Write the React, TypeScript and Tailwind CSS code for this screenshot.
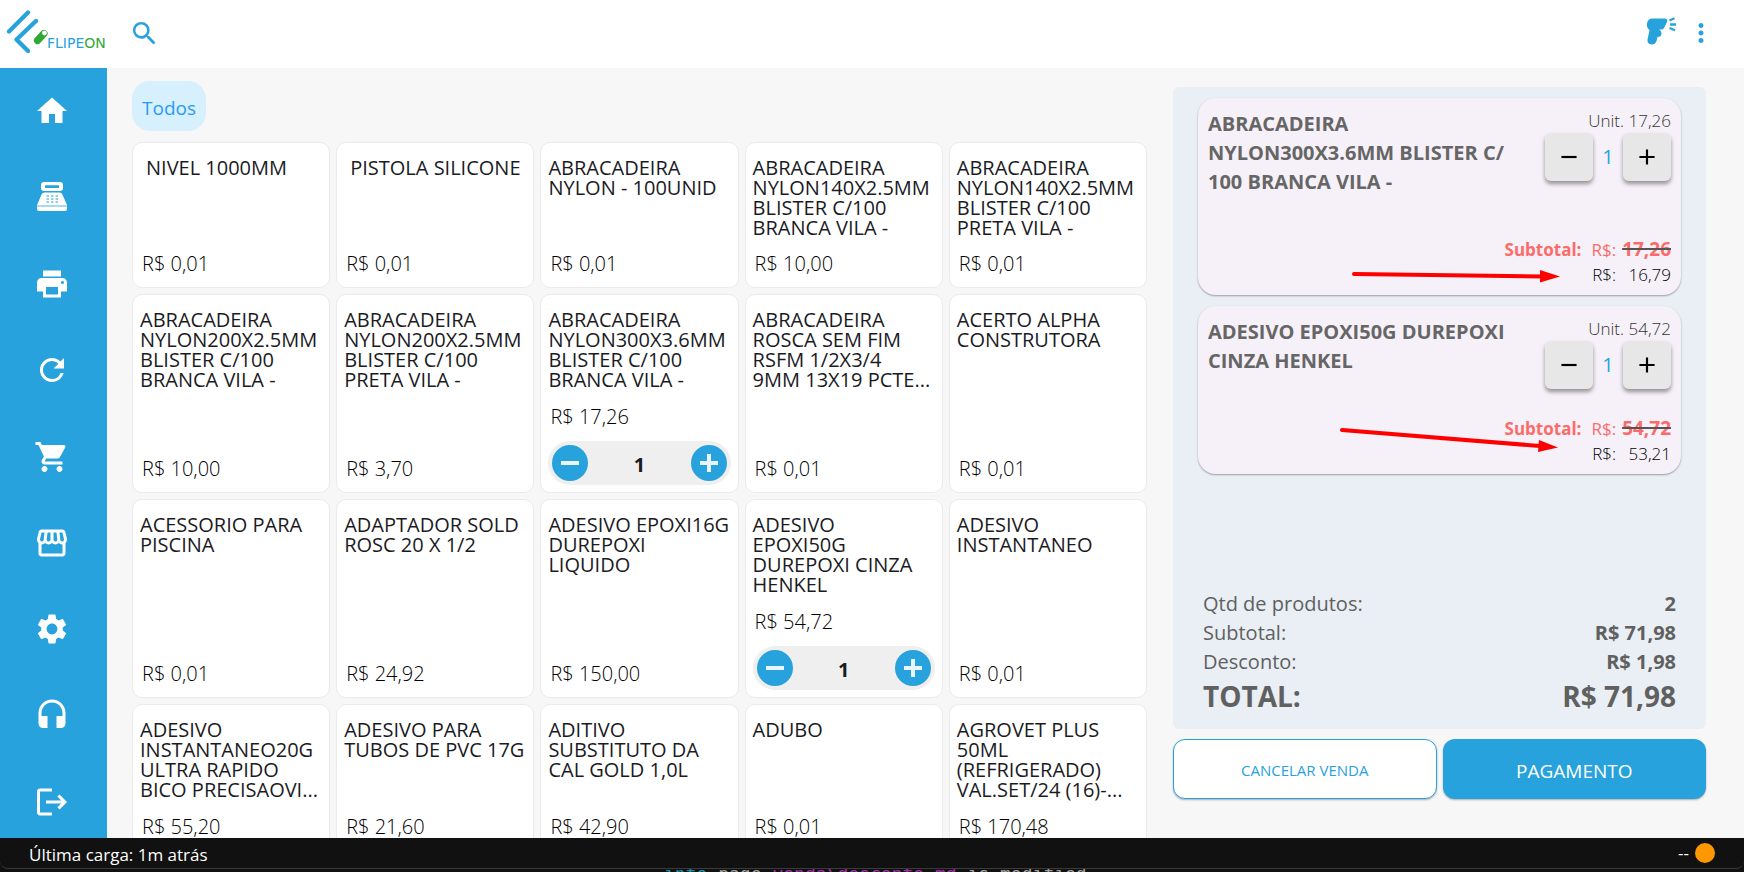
import { Fragment } from "react";
import type { ReactNode } from "react";
import {
  MdAdd,
  MdHeadset,
  MdHome,
  MdLocalPrintshop,
  MdLogout,
  MdMoreVert,
  MdOutlineStorefront,
  MdRefresh,
  MdRemove,
  MdSearch,
  MdSettings,
  MdShoppingCart,
} from "react-icons/md";

type Product = {
  name: string;
  price: string;
  indent?: boolean;
  qty?: number;
};

type CartItem = {
  name: string;
  unit: string;
  discounted: string;
  arrow: ReactNode;
};

const products: Product[] = [
  { name: "NIVEL 1000MM", price: "0,01", indent: true },
  { name: "PISTOLA SILICONE", price: "0,01", indent: true },
  { name: "ABRACADEIRA NYLON - 100UNID", price: "0,01" },
  { name: "ABRACADEIRA NYLON140X2.5MM BLISTER C/100 BRANCA VILA -", price: "10,00" },
  { name: "ABRACADEIRA NYLON140X2.5MM BLISTER C/100 PRETA VILA -", price: "0,01" },
  { name: "ABRACADEIRA NYLON200X2.5MM BLISTER C/100 BRANCA VILA -", price: "10,00" },
  { name: "ABRACADEIRA NYLON200X2.5MM BLISTER C/100 PRETA VILA -", price: "3,70" },
  { name: "ABRACADEIRA NYLON300X3.6MM BLISTER C/100 BRANCA VILA -", price: "17,26", qty: 1 },
  { name: "ABRACADEIRA ROSCA SEM FIM RSFM 1/2X3/4\n9MM 13X19 PCTE...", price: "0,01" },
  { name: "ACERTO ALPHA CONSTRUTORA", price: "0,01" },
  { name: "ACESSORIO PARA PISCINA", price: "0,01" },
  { name: "ADAPTADOR SOLD ROSC 20 X 1/2", price: "24,92" },
  { name: "ADESIVO EPOXI16G DUREPOXI LIQUIDO", price: "150,00" },
  { name: "ADESIVO\nEPOXI50G\nDUREPOXI CINZA HENKEL", price: "54,72", qty: 1 },
  { name: "ADESIVO INSTANTANEO", price: "0,01" },
  { name: "ADESIVO INSTANTANEO20G ULTRA RAPIDO BICO PRECISAOVI...", price: "55,20" },
  { name: "ADESIVO PARA TUBOS DE PVC 17G", price: "21,60" },
  { name: "ADITIVO SUBSTITUTO DA CAL GOLD 1,0L", price: "42,90" },
  { name: "ADUBO", price: "0,01" },
  { name: "AGROVET PLUS 50ML (REFRIGERADO) VAL.SET/24 (16)-...", price: "170,48" },
];

const cart: CartItem[] = [
  {
    name: "ABRACADEIRA NYLON300X3.6MM BLISTER C/\u200b100 BRANCA VILA -",
    unit: "17,26",
    discounted: "16,79",
    arrow: (
      <svg
        className="absolute right-[121px] bottom-3 pointer-events-none"
        width="208"
        height="14"
        viewBox="0 0 208 14"
        aria-hidden="true"
      >
        <path d="M2 5 L190 7.5" stroke="#ff0000" strokeWidth="4" strokeLinecap="round" />
        <path d="M188 1 L208 7.5 L188 13.5 Z" fill="#ff0000" />
      </svg>
    ),
  },
  {
    name: "ADESIVO EPOXI50G DUREPOXI CINZA HENKEL",
    unit: "54,72",
    discounted: "53,21",
    arrow: (
      <svg
        className="absolute right-[123px] bottom-5 pointer-events-none"
        width="218"
        height="28"
        viewBox="0 0 218 28"
        aria-hidden="true"
      >
        <path d="M2 4 L200 20" stroke="#ff0000" strokeWidth="4" strokeLinecap="round" />
        <path d="M199 14 L218 21.5 L198 26 Z" fill="#ff0000" />
      </svg>
    ),
  },
];

function CashRegister() {
  return (
    <svg width="36" height="36" viewBox="0 0 36 36" fill="currentColor" aria-hidden="true">
      <path
        fillRule="evenodd"
        d="M10 3h16a3 3 0 0 1 3 3v3a3 3 0 0 1-3 3H10a3 3 0 0 1-3-3V6a3 3 0 0 1 3-3zm1 3.200v2.800h14V6.200z"
      />
      <path d="M10.500 13.500h15a3 3 0 0 1 2.800 1.800L33 26H3l4.700-10.700a3 3 0 0 1 2.800-1.800z" />
      <path d="M3 26h30v2H3z" fillOpacity="0.6" />
      <path d="M3 28h30v2a2 2 0 0 1-2 2H5a2 2 0 0 1-2-2z" />
      <path
        d="M12.500 17h2.500M17 17h2.500M21.500 17h2.500M12.500 20h2.500M17 20h2.500M21.500 20h2.500M12.500 23h2.500M17 23h2.500M21.500 23h2.500"
        stroke="#27a2dc"
        strokeWidth="1.200"
      />
    </svg>
  );
}

function ScannerGun() {
  return (
    <svg className="-mt-1" width="32" height="30" viewBox="0 0 32 30" aria-hidden="true">
      <path
        d="M6.500 2.500H19q3 0 2 3.500l-3 6q-.800 1.500-2.500 1.500h-2.500q2.500 1 2.500 4 0 3.500-4 3.500l-1 4q-1.200 3.500-5 3.500-4.500-.500-4-5l2-9.500Q.500 12 1 7.500q.800-5 5.500-5z"
        fill="#27a2dc"
      />
      <path d="M23.500 4.500l5-2.300M24 8.500h6M23.500 12l5.500 2.300" stroke="#27a2dc" strokeWidth="2.300" />
    </svg>
  );
}

function Logo() {
  return (
    <svg className="-mt-1.5" width="102" height="46" viewBox="0 0 102 46" role="img" aria-label="Flipeon">
      <g fill="none" stroke="#27a2dc" strokeWidth="4.400" strokeLinecap="round" strokeLinejoin="round">
        <path d="M3 23.500L22 4.500" />
        <path d="M30 13L10.500 31.500L22 43" />
      </g>
      <path d="M31.500 32.500L38 25.500" stroke="#2fa836" strokeWidth="7.200" strokeLinecap="round" />
      <circle cx="38.500" cy="25" r="2.400" fill="#ffffff" />
      <text x="41" y="40" fontSize="14" fontFamily="'DejaVu Sans', sans-serif" fill="#27a2dc">
        FLIPE
        <tspan fill="#2fa836">ON</tspan>
      </text>
    </svg>
  );
}

const menu = [
  { label: "Início", icon: <MdHome size={36} /> },
  { label: "Caixa", icon: <CashRegister /> },
  { label: "Imprimir", icon: <MdLocalPrintshop size={36} /> },
  { label: "Atualizar", icon: <MdRefresh size={36} /> },
  { label: "Vendas", icon: <MdShoppingCart size={36} /> },
  { label: "Loja", icon: <MdOutlineStorefront size={36} /> },
  { label: "Configurações", icon: <MdSettings size={36} /> },
  { label: "Suporte", icon: <MdHeadset size={36} /> },
  { label: "Sair", icon: <MdLogout size={36} /> },
];

function RoundButton({ label, d }: { label: string; d: string }) {
  return (
    <button
      aria-label={label}
      className="flex items-center justify-center w-9 h-9 rounded-full bg-[#27a2dc] text-[#e8f5fc]"
    >
      <svg width="18" height="18" viewBox="0 0 18 18" stroke="currentColor" strokeWidth="4" aria-hidden="true">
        <path d={d} />
      </svg>
    </button>
  );
}

function ProductCard({ product }: { product: Product }) {
  return (
    <article className="flex flex-col min-w-0 px-[7px] pt-[15px] pb-[7px] bg-white border border-[#ebebeb] rounded-[10px] text-[#1b1b1f]">
      <h3
        className={`text-xl leading-5 font-medium ${product.indent ? "pl-1.5 whitespace-nowrap" : "whitespace-pre-line"}`}
      >
        {product.name}
      </h3>
      <p className="pl-0.5 mt-auto text-xl leading-8 font-light text-black">R$ {product.price}</p>
      {product.qty && (
        <div className="flex items-center justify-between h-11 p-1 mt-2 rounded-full bg-[#efefef]">
          <RoundButton label="Diminuir" d="M0 9h18" />
          <span className="pt-1 text-xl font-bold">{product.qty}</span>
          <RoundButton label="Aumentar" d="M0 9h18M9 0v18" />
        </div>
      )}
    </article>
  );
}

function CartCard({ item }: { item: CartItem }) {
  const button =
    "flex items-center justify-center w-12 h-12 rounded-md bg-[#e7e7e7] text-black shadow-[0_3px_4px_rgba(0,0,0,0.4)]";

  return (
    <article className="relative px-2.5 pt-[11px] pb-2 rounded-[18px] bg-[#f6f1f9] shadow-[0_1px_2px_rgba(0,0,0,0.35)]">
      <div className="flex justify-between">
        <h3 className="w-[310px] pb-[39px] text-xl leading-[29px] font-bold text-[#666666]">{item.name}</h3>
        <div className="text-right">
          <p className="text-[17px] leading-6 font-light text-[#333333]">Unit. {item.unit}</p>
          <div className="flex items-center justify-between w-[126px] h-12">
            <button aria-label="Diminuir" className={button}>
              <MdRemove size={26} />
            </button>
            <span className="text-xl text-[#27a2dc]">1</span>
            <button aria-label="Aumentar" className={button}>
              <MdAdd size={26} />
            </button>
          </div>
        </div>
      </div>
      <div className="grid grid-cols-[1fr_auto_auto] items-baseline text-right text-[17px] leading-6">
        <span className="pr-2.5 font-bold text-[#fb6c69]">Subtotal:</span>
        <span className="pr-1.5 text-[#fb6c69]">R$:</span>
        <del className="text-[19px] leading-7 font-bold text-[#fb6c69] decoration-[#555555] decoration-2">
          {item.unit}
        </del>
        <span className="col-start-2 pr-1.5 font-light text-black">R$:</span>
        <span className="font-light text-black">{item.discounted}</span>
      </div>
      {item.arrow}
    </article>
  );
}

export default function App() {
  const totals = [
    ["Qtd de produtos:", "2"],
    ["Subtotal:", "R$ 71,98"],
    ["Desconto:", "R$ 1,98"],
  ];

  return (
    <div className="flex flex-col h-screen overflow-hidden bg-[#f7f7f7] font-['Open_Sans','Noto_Sans',sans-serif]">
      {/* Top bar */}
      <header className="flex items-center justify-between h-17 pl-1.5 pr-7 bg-white shrink-0">
        <div className="flex items-center gap-[21px]">
          <Logo />
          <button aria-label="Buscar" className="pb-0.5 text-[#27a2dc]">
            <MdSearch size={31} />
          </button>
        </div>
        <div className="flex items-center gap-2 pb-0.5 text-[#27a2dc]">
          <button aria-label="Leitor">
            <ScannerGun />
          </button>
          <button aria-label="Mais opções">
            <MdMoreVert size={30} />
          </button>
        </div>
      </header>

      <div className="flex flex-1 min-h-0">
        {/* Sidebar */}
        <nav className="flex flex-col items-center justify-between w-[107px] pt-[25px] pb-[18px] pr-1 bg-[#27a2dc] text-white shrink-0">
          {menu.map((entry) => (
            <button key={entry.label} aria-label={entry.label}>
              {entry.icon}
            </button>
          ))}
        </nav>

        {/* Products */}
        <main className="flex-1 min-w-0 pt-[13px] pl-[25px] overflow-hidden">
          <button className="h-[50px] pt-1 px-2.5 rounded-[18px] bg-[#d7f0fe] text-[19px] text-[#2b9af3]">Todos</button>
          <section className="grid grid-cols-5 grid-rows-[146px_199px_199px_147px] gap-1.5 mt-[11px]">
            {products.map((product) => (
              <ProductCard key={product.name} product={product} />
            ))}
          </section>
        </main>

        {/* Cart */}
        <aside className="flex flex-col w-[597px] pt-[19px] pl-[26px] pr-[38px] pb-[39px] shrink-0">
          <div className="flex flex-col flex-1 px-[25px] pt-[11px] pb-[13px] rounded-md bg-[#e9eff4]">
            <div className="flex flex-col gap-[11px]">
              {cart.map((item) => (
                <CartCard key={item.name} item={item} />
              ))}
            </div>
            <dl className="grid grid-cols-2 px-[5px] mt-auto text-xl leading-[29px] text-[#606060]">
              {totals.map(([label, value]) => (
                <Fragment key={label}>
                  <dt>{label}</dt>
                  <dd className="font-bold text-right">{value}</dd>
                </Fragment>
              ))}
              <dt className="text-[28px] leading-10 font-bold">TOTAL:</dt>
              <dd className="text-[28px] leading-10 font-bold text-right">R$ 71,98</dd>
            </dl>
          </div>
          <div className="grid grid-cols-2 mt-2.5 gap-1.5">
            <button className="border border-[#27a2dc] h-15 pt-0.5 rounded-xl bg-white text-[15px] text-[#27a2dc] shadow-[0_1px_2px_rgba(0,0,0,0.3)]">
              CANCELAR VENDA
            </button>
            <button className="h-15 pt-1 rounded-xl bg-[#27a2dc] text-[19px] text-white shadow-[0_1px_2px_rgba(0,0,0,0.3)]">
              PAGAMENTO
            </button>
          </div>
        </aside>
      </div>

      {/* Status bar */}
      <footer className="bg-[#111111] shrink-0">
        <div className="flex items-center justify-between px-[29px] border-b border-[#3a3a3a] rounded-b-lg h-[31px] text-[17px] text-white">
          <span className="pt-1">Última carga: 1m atrás</span>
          <span className="flex items-center gap-1.5">
            --
            <span className="w-5 h-5 rounded-full bg-[#ff9800]" />
          </span>
        </div>
        <div className="h-[3px] pl-[664px] overflow-hidden font-['DejaVu_Sans_Mono',monospace] text-lg leading-[10px] whitespace-pre text-[#a0a0a0]">
          <span className="text-[#1a93a8]">into</span> page <span className="text-[#a232a8]">venda\desconto.md</span> is modified
        </div>
      </footer>
    </div>
  );
}
